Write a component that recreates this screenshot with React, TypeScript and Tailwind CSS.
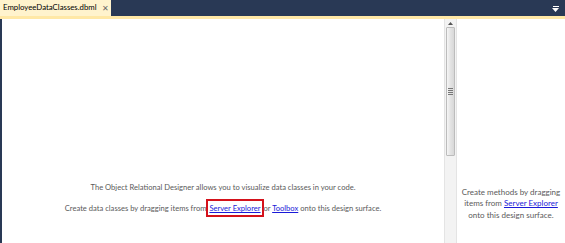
export default function App() {
  return (
    <div className="flex h-[243px] w-[565px] flex-col overflow-hidden bg-white font-['Lato',sans-serif] text-[#5a5a5a]">
      <div className="flex h-[16px] items-end bg-[#293955]">
        <div className="flex h-[16px] w-[111px] items-center gap-[5px] bg-[#fff3cd] pl-[3px] text-[7.8px] text-black">
          <span className="whitespace-nowrap">EmployeeDataClasses.dbml</span>
          <span className="text-[8px] leading-none text-[#666]">✕</span>
        </div>
        <div className="flex-1" />
        <div className="mb-[4px] mr-[6px] flex flex-col items-center">
          <span className="h-[1px] w-[6px] bg-white" />
          <svg width="7" height="4" viewBox="0 0 7 4" className="mt-[1px]">
            <path d="M0 0h7L3.5 4z" fill="#fff" />
          </svg>
        </div>
      </div>
      <div className="h-[3px] bg-[#ffe8a6]" />
      <div className="flex flex-1 border-l-2 border-[#293955]">
        <div className="flex flex-1 flex-col items-center justify-end pb-[30px] text-[7.6px] leading-none">
          <p>The Object Relational Designer allows you to visualize data classes in your code.</p>
          <p className="mt-[14px]">
            Create data classes by dragging items from{' '}
            <span className="-mx-[2px] border-2 border-[#d4121b] px-[1px] py-[2px]">
              <a className="text-[#1a1ad8] underline">Server Explorer</a>
            </span>{' '}
            or <a className="text-[#1a1ad8] underline">Toolbox</a> onto this design surface.
          </p>
        </div>
        <div className="flex w-[13px] flex-col border-x border-[#e4e4e4] bg-[#f3f3f3]">
          <div className="flex h-[8px] items-center justify-center">
            <svg width="5" height="3" viewBox="0 0 5 3">
              <path d="M2.5 0L5 3H0z" fill="#555" />
            </svg>
          </div>
          <div className="mx-[1px] flex h-[129px] items-center justify-center rounded-[1px] border border-[#bcbcbc] bg-gradient-to-r from-[#f6f6f6] via-[#e3e3e3] to-[#d8d8d8]">
            <div className="flex flex-col gap-[1px]">
              <span className="h-[1px] w-[5px] bg-[#777]" />
              <span className="h-[1px] w-[5px] bg-[#777]" />
              <span className="h-[1px] w-[5px] bg-[#777]" />
              <span className="h-[1px] w-[5px] bg-[#777]" />
            </div>
          </div>
        </div>
        <div className="flex w-[108px] flex-col items-center justify-end pb-[22px] text-center text-[8px] leading-[11.5px]">
          <p>
            Create methods by dragging
            <br />
            items from <a className="text-[#1a1ad8] underline">Server Explorer</a>
            <br />
            onto this design surface.
          </p>
        </div>
      </div>
    </div>
  )
}
